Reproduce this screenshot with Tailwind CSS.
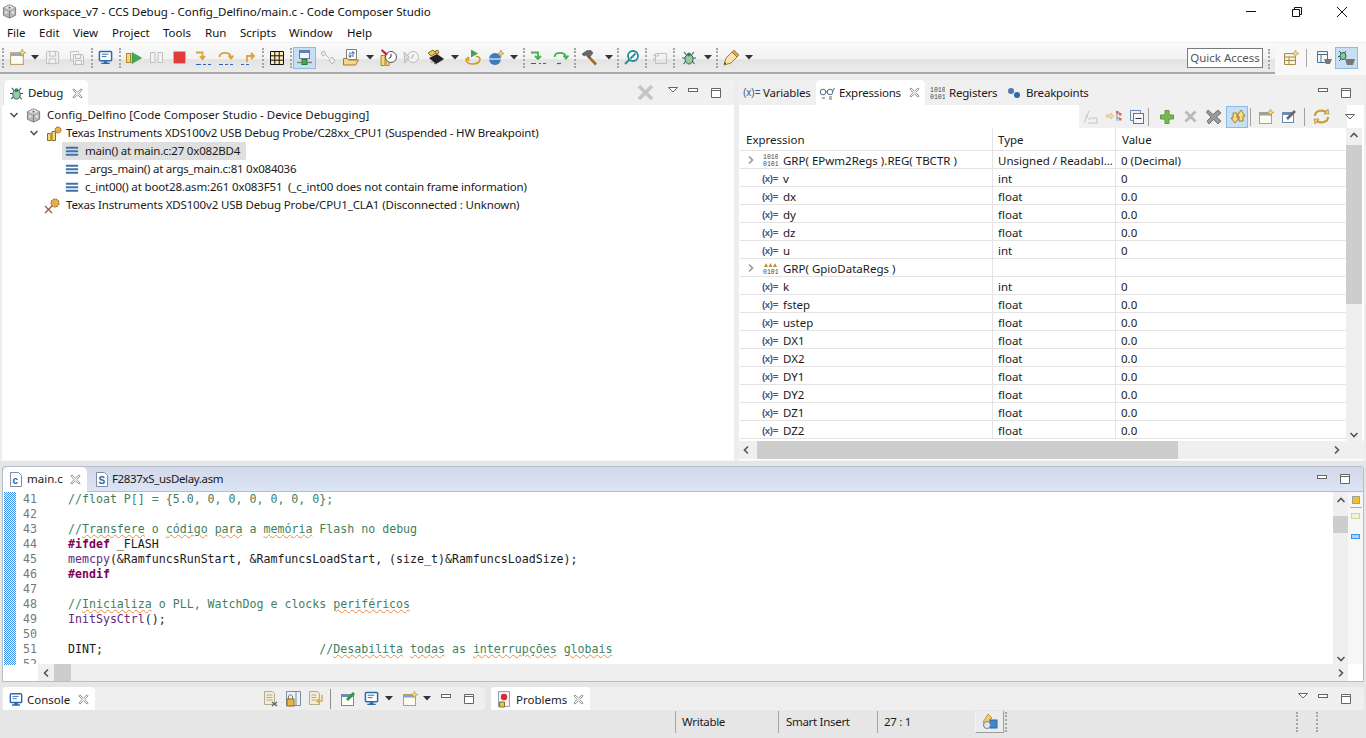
<!DOCTYPE html>
<html lang="en">
<head>
    <meta charset="UTF-8">
    <title>workspace_v7 - CCS Debug - Config_Delfino/main.c - Code Composer Studio</title>
    <script src="https://cdn.jsdelivr.net/npm/@tailwindcss/browser@4"></script>
</head>
<body class="w-[1366px] h-[738px] overflow-hidden flex flex-col bg-[#e6e6e6] text-[#1a1a1a] text-[11.5px] font-['Noto_Sans',sans-serif]">

    <!-- shared icons -->
    <svg class="absolute w-0 h-0">
        <defs><pattern id="dither" width="2" height="2" patternUnits="userSpaceOnUse"><rect width="2" height="2" fill="#fff"/><rect width="1" height="1" fill="#3a90ee"/><rect x="1" y="1" width="1" height="1" fill="#3a90ee"/></pattern></defs>
        <symbol id="x" viewBox="0 0 12 12"><path d="M2 1 6 4.500 10 1 11 2 7.500 6 11 10 10 11 6 7.500 2 11 1 10 4.500 6 1 2Z" fill="#fff" stroke="#8a8a8a"/></symbol>
        <symbol id="min" viewBox="0 0 12 12"><rect x="1.500" y="3.500" width="9" height="3" fill="#fff" stroke="#666"/></symbol>
        <symbol id="max" viewBox="0 0 12 12"><path d="M1.500 1.500h9v9h-9zM1.500 3.500h9" fill="#fff" stroke="#666"/></symbol>
        <symbol id="menu" viewBox="0 0 12 12"><path d="M1.500 3.500h9L6 8Z" fill="#fff" stroke="#666"/></symbol>
        <symbol id="drop" viewBox="0 0 8 5"><path d="M0 0h8L4 4.500Z" fill="#333"/></symbol>
        <symbol id="chev" viewBox="0 0 10 10"><path d="M1.500 3 5 6.500 8.500 3" fill="none" stroke="#555" stroke-width="1.600"/></symbol>
        <symbol id="frame" viewBox="0 0 16 16"><path d="M1 3h14v2.500H1zM1 7h14v2.500H1zM1 11h14v2.500H1z" fill="#3f74a8"/></symbol>
        <symbol id="wiz" viewBox="0 0 16 16"><rect x="1.500" y="3.500" width="12" height="11" fill="#fdfaf0" stroke="#b7a06a"/><rect x="2" y="4" width="11" height="2.500" fill="#7fa6cf"/><path d="M12.500 0 13.500 2.500 16 3.500 13.500 4.500 12.500 7 11.500 4.500 9 3.500 11.500 2.500Z" fill="#f8dc84" stroke="#b8902c" stroke-width=".6"/></symbol>
        <symbol id="monitor" viewBox="0 0 16 16"><rect x="1.500" y="1.500" width="13" height="10" rx="1" fill="#fff" stroke="#2f6aa8" stroke-width="1.600"/><path d="M4 4.500h7M4 7h5" stroke="#2f6aa8"/><path d="M6 12h4v1.500h2.500V15h-9v-1.500H6Z" fill="#2f6aa8"/></symbol>
        <symbol id="cube" viewBox="0 0 16 16"><path d="M8 1 14.500 4V12L8 15 1.500 12V4Z" fill="#b9b9b9" stroke="#7c7c7c"/><path d="M8 1 14.500 4 8 7 1.500 4Z" fill="#e9e9e9" stroke="#7c7c7c" stroke-width=".6"/><path d="M8 7V15" stroke="#7c7c7c"/><circle cx="8" cy="4" r="1" fill="#555"/><circle cx="4.500" cy="9" r="1" fill="#fff"/><circle cx="11.500" cy="9" r="1" fill="#fff"/></symbol>
        <symbol id="bug" viewBox="0 0 16 16"><path d="M3 2 5.500 5M13 2 10.500 5M1 8h3M12 8h3M2.500 14 5 11M13.500 14 11 11" stroke="#2f5f5a" stroke-width="1.100"/><ellipse cx="8" cy="9" rx="4" ry="5" fill="#9ccb9a" stroke="#2f5f5a"/><circle cx="8" cy="4.500" r="2" fill="#3f7a70"/></symbol>
    </svg>

    <!-- title bar -->
    <div class="h-[23px] shrink-0 bg-white flex items-center relative">
        <svg class="w-[15px] h-[15px] ml-[2px]"><use href="#cube"/></svg>
        <span class="ml-[6px] text-[#111]">workspace_v7 - CCS Debug - Config_Delfino/main.c - Code Composer Studio</span>
        <div class="ml-auto flex items-center h-full">
            <div class="w-[46px] flex justify-center"><svg class="w-[10px] h-[10px]" viewBox="0 0 10 10"><path d="M0 4.500h10" stroke="#111"/></svg></div>
            <div class="w-[46px] flex justify-center"><svg class="w-[10px] h-[10px]" viewBox="0 0 10 10"><path d="M.5 2.500h7v7h-7zM2.500 2.500v-2h7v7h-2" fill="none" stroke="#111"/></svg></div>
            <div class="w-[46px] flex justify-center pr-[2px]"><svg class="w-[10px] h-[10px]" viewBox="0 0 10 10"><path d="M0 0 10 10M10 0 0 10" stroke="#111"/></svg></div>
        </div>
    </div>

    <!-- menu bar -->
    <div class="h-[19px] shrink-0 bg-white flex items-center pl-[7px] text-[#111]">
        <span class="w-[32px]">File</span><span class="w-[34px]">Edit</span><span class="w-[39px]">View</span><span class="w-[51px]">Project</span><span class="w-[42px]">Tools</span><span class="w-[35px]">Run</span><span class="w-[49px]">Scripts</span><span class="w-[58px]">Window</span><span>Help</span>
    </div>

    <!-- main toolbar -->
    <div class="h-[33px] shrink-0 flex bg-[#f8f8f8] border-t border-[#f0f0f0]">
        <div class="w-[1275px] h-full flex items-center pl-[2px] bg-[linear-gradient(#fafafa,#f2f2f2_50%,#e3e3e3_52%,#ececec_92%,#a8a8a8_92%,#a8a8a8_96%,#f0f0f0_96%)] pb-[3px]">
            <i class="w-[3px] h-[20px] border-l-2 border-dotted border-[#a5a5a5]"></i>
            <div class="w-[24px] flex justify-center"><svg class="w-[17px] h-[17px]"><use href="#wiz"/></svg></div>
            <div class="w-[12px] flex justify-center"><svg class="w-[8px] h-[5px]"><use href="#drop"/></svg></div>
            <div class="w-[23px] flex justify-center"><svg class="w-[15px] h-[15px]" viewBox="0 0 16 16"><path d="M2.500 1.500h11l1 1v12h-13v-12ZM5 1.500v5h6v-5M4.500 14.500v-5h7v5" fill="#f0f0f0" stroke="#bdbdbd"/></svg></div>
            <div class="w-[25px] flex justify-center"><svg class="w-[16px] h-[16px]" viewBox="0 0 16 16"><path d="M1.500 1.500h8v2M1.500 1.500v9h2" fill="none" stroke="#c4c4c4"/><path d="M4.500 4.500h9l1 1v9h-10ZM6.500 4.500v4h5v-4M6.500 14.500v-4h6v4" fill="#f0f0f0" stroke="#bdbdbd"/></svg></div>
            <div class="w-[5px] flex justify-center"><i class="h-[20px] border-l-2 border-dotted border-[#a5a5a5]"></i></div>
            <div class="w-[23px] flex justify-center"><svg class="w-[15px] h-[15px]"><use href="#monitor"/></svg></div>
            <div class="w-[5px] flex justify-center"><i class="h-[20px] border-l-2 border-dotted border-[#a5a5a5]"></i></div>
            <div class="w-[23px] flex justify-center"><svg class="w-[16px] h-[16px]" viewBox="0 0 16 16"><rect x=".5" y="3.500" width="4" height="9" fill="#f5d978" stroke="#a98a2c"/><path d="M6 2.500 15.500 8 6 13.500Z" fill="#46a85a" stroke="#2e8a48" stroke-width=".6"/></svg></div>
            <div class="w-[23px] flex justify-center"><svg class="w-[13px] h-[13px]" viewBox="0 0 13 13"><path d="M.5 1.500h4.500v10H.5zM8 1.500h4.500v10H8z" fill="#f2f2f2" stroke="#bfbfbf"/></svg></div>
            <div class="w-[23px] flex justify-center"><svg class="w-[13px] h-[13px]" viewBox="0 0 13 13"><rect x=".5" y=".5" width="12" height="12" rx="1" fill="#e23b3b" stroke="#e8a0a0"/></svg></div>
            <div class="w-[23px] flex justify-center"><svg class="w-[16px] h-[16px]" viewBox="0 0 16 16"><path d="M1 2.500h6.500V8M5 6l2.500 3L10 6" fill="none" stroke="#d6a63a" stroke-width="1.800"/><path d="M1 14.500h5M8 14.500h3M13 14.500h3" stroke="#2f62a8" stroke-width="1.200"/></svg></div>
            <div class="w-[23px] flex justify-center"><svg class="w-[16px] h-[16px]" viewBox="0 0 16 16"><path d="M1.500 7C2 1.500 12 1.500 13 7M10.500 5.500 13 8.500 15.500 5.500" fill="none" stroke="#d6a63a" stroke-width="1.800"/><path d="M1 14.500h4M7 14.500h3M12 14.500h3" stroke="#2f62a8" stroke-width="1.200"/></svg></div>
            <div class="w-[23px] flex justify-center"><svg class="w-[16px] h-[16px]" viewBox="0 0 16 16"><path d="M6 12V6h6M10 3l3 3-3 3" fill="none" stroke="#d6a63a" stroke-width="1.800"/><path d="M0 14.500h3M5 14.500h3" stroke="#2f62a8" stroke-width="1.200"/></svg></div>
            <div class="w-[5px] flex justify-center"><i class="h-[20px] border-l-2 border-dotted border-[#a5a5a5]"></i></div>
            <div class="w-[23px] flex justify-center"><svg class="w-[14px] h-[14px]" viewBox="0 0 14 14"><path d="M.5.500h13v13H.500zM.5 4.800h13M.5 9.200h13M4.800.5v13M9.200.5v13" fill="#fbe9b7" stroke="#111"/></svg></div>
            <div class="w-[5px] flex justify-center"><i class="h-[20px] border-l-2 border-dotted border-[#a5a5a5]"></i></div>
            <div class="w-[23px] h-[22px] flex justify-center items-center bg-[#c6dff5] border border-[#8fbbe2]"><svg class="w-[15px] h-[16px]" viewBox="0 0 15 16"><rect x="2.500" y=".5" width="10" height="8" fill="#f4f4f4" stroke="#5a82ad"/><path d="M3 1h9v2H3z" fill="#5a82ad"/><path d="M0 12.500h15" stroke="#9a7b6a" stroke-width="1.400"/><rect x="5" y="9.500" width="5" height="5" fill="#48a84f" stroke="#2c7a35"/></svg></div>
            <div class="w-[23px] flex justify-center"><svg class="w-[16px] h-[16px]" viewBox="0 0 16 16"><path d="M1 3l3-2 2 3-3 2ZM6 5l3 3M10 9l2-2 3 4-3 3-3-4Z" fill="#eee" stroke="#b5b5b5"/></svg></div>
            <div class="w-[23px] flex justify-center"><svg class="w-[16px] h-[17px]" viewBox="0 0 16 17"><path d="M3.500.5h10v10h-10z" fill="#fff" stroke="#7d7d7d"/><path d="M7 3v5M5.500 6.500 7 8.500 8.500 6.500M10 8V3M8.500 4.500 10 2.500 11.500 4.500" fill="none" stroke="#2f62a8"/><path d="M.5 9.500h4l1 1.500h10l-3 5H.500Z" fill="#f6d88c" stroke="#a57d2a"/></svg></div>
            <div class="w-[15px] flex justify-center"><svg class="w-[8px] h-[5px]"><use href="#drop"/></svg></div>
            <div class="w-[23px] flex justify-center"><svg class="w-[17px] h-[17px]" viewBox="0 0 17 17"><path d="M1 6.500h4v10H1zM6 9.500h3v7H6z" fill="#f5d978" stroke="#a98a2c"/><circle cx="11" cy="8" r="5.500" fill="#fff" stroke="#555"/><path d="M11 5v3l-2.500 1.500" fill="none" stroke="#333"/><path d="M2 0 8 5 6 6.500 1 2Z" fill="#d9203a"/></svg></div>
            <div class="w-[23px] flex justify-center"><svg class="w-[17px] h-[17px]" viewBox="0 0 17 17"><circle cx="10" cy="8" r="5.500" fill="#f5f5f5" stroke="#bbb"/><path d="M10 5v3l-2.500 1.500M1 3l5 5-4 6Z" fill="#ddd" stroke="#b8b8b8"/></svg></div>
            <div class="w-[25px] flex justify-center"><svg class="w-[18px] h-[17px]" viewBox="0 0 18 17"><path d="M2 9 10 5 17 10 9 15Z" fill="#222"/><path d="M4 12.500 5.500 14M7 14l1.500 1.500M11 14l1-1M14 12.500l1-1" stroke="#777"/><path d="M1 4 6 1l3 3-5 3Z" fill="#f2c747" stroke="#8a6d1d"/><circle cx="10" cy="3" r="1.800" fill="#f2c747" stroke="#8a6d1d"/></svg></div>
            <div class="w-[13px] flex justify-center"><svg class="w-[8px] h-[5px]"><use href="#drop"/></svg></div>
            <div class="w-[23px] flex justify-center"><svg class="w-[16px] h-[17px]" viewBox="0 0 16 17"><path d="M6 .5 13 4.500 6 8.500Z" fill="#3ea45c"/><path d="M3.500 8 1 10.500c0 6 13 6 14 0 0-2-2-3-4-3M3.500 8v4" fill="none" stroke="#d69a1e" stroke-width="1.600"/></svg></div>
            <div class="w-[23px] flex justify-center"><svg class="w-[16px] h-[15px]" viewBox="0 0 16 15"><circle cx="7" cy="9" r="6" fill="#3e7bc0"/><path d="M1 9h12" stroke="#bcd5ee" stroke-width="1.600"/><path d="M13 0 14 2.500 16 3.500 14 4.500 13 7 12 4.500 10 3.500 12 2.500Z" fill="#f2d169" stroke="#a57d2a" stroke-width=".5"/></svg></div>
            <div class="w-[14px] flex justify-center"><svg class="w-[8px] h-[5px]"><use href="#drop"/></svg></div>
            <div class="w-[5px] flex justify-center"><i class="h-[20px] border-l-2 border-dotted border-[#a5a5a5]"></i></div>
            <div class="w-[23px] flex justify-center"><svg class="w-[16px] h-[15px]" viewBox="0 0 16 15"><path d="M1 2.500h7V8M5 6l3 3 3-3" fill="none" stroke="#3fb34f" stroke-width="1.800"/><path d="M1 13.500h5M9 13.500h2M13 13.500h3" stroke="#2f62a8" stroke-width="1.200"/></svg></div>
            <div class="w-[23px] flex justify-center"><svg class="w-[16px] h-[15px]" viewBox="0 0 16 15"><path d="M1.500 7C2 1.500 12 1.500 13 7M10.500 5.500 13 8.500 15.500 5.500" fill="none" stroke="#3fb34f" stroke-width="1.800"/><path d="M4 13.500h4" stroke="#2f62a8" stroke-width="1.200"/></svg></div>
            <div class="w-[5px] flex justify-center"><i class="h-[20px] border-l-2 border-dotted border-[#a5a5a5]"></i></div>
            <div class="w-[25px] flex justify-center"><svg class="w-[16px] h-[16px]" viewBox="0 0 16 16"><path d="M5.500 5.500 14 14.500" stroke="#a56a2c" stroke-width="2.600"/><path d="M0 4 5 .5h4l2 2.500-4 5-3-3-2 1Z" fill="#666" stroke="#444" stroke-width=".5"/></svg></div>
            <div class="w-[13px] flex justify-center"><svg class="w-[8px] h-[5px]"><use href="#drop"/></svg></div>
            <div class="w-[5px] flex justify-center"><i class="h-[20px] border-l-2 border-dotted border-[#a5a5a5]"></i></div>
            <div class="w-[23px] flex justify-center"><svg class="w-[15px] h-[15px]" viewBox="0 0 15 15"><circle cx="9" cy="6" r="5" fill="#fff" stroke="#1f8a9c" stroke-width="1.800"/><path d="M5.500 9.500 1 14M6.500 8.500l5-5" stroke="#1f8a9c" stroke-width="1.800"/></svg></div>
            <div class="w-[5px] flex justify-center"><i class="h-[20px] border-l-2 border-dotted border-[#a5a5a5]"></i></div>
            <div class="w-[23px] flex justify-center"><svg class="w-[15px] h-[13px]" viewBox="0 0 15 13"><path d="M3.500 2.500h11v10h-11zM3.500 5h3V2.500M1 3.500l3 2M1 7l3 2M1 9.500l3-2" fill="none" stroke="#c0c0c0"/></svg></div>
            <div class="w-[5px] flex justify-center"><i class="h-[20px] border-l-2 border-dotted border-[#a5a5a5]"></i></div>
            <div class="w-[25px] flex justify-center"><svg class="w-[16px] h-[16px]"><use href="#bug"/></svg></div>
            <div class="w-[13px] flex justify-center"><svg class="w-[8px] h-[5px]"><use href="#drop"/></svg></div>
            <div class="w-[5px] flex justify-center"><i class="h-[20px] border-l-2 border-dotted border-[#a5a5a5]"></i></div>
            <div class="w-[24px] flex justify-center"><svg class="w-[16px] h-[16px]" viewBox="0 0 16 16"><path d="M1 15 3 8 9 2l5 5-6 6Z" fill="#f8e3a8" stroke="#a57d2a"/><path d="M9 2l2-2 5 5-2 2Z" fill="#e8a24a" stroke="#8a5d1a" stroke-width=".6"/><path d="M1 15l2-1.500L2 12Z" fill="#222"/></svg></div>
            <div class="w-[12px] flex justify-center"><svg class="w-[8px] h-[5px]"><use href="#drop"/></svg></div>
            <div class="ml-auto mr-[12px] w-[76px] h-[20px] bg-white border border-[#7a7a7a] flex items-center justify-center text-[#555]">Quick Access</div>
        </div>
        <div class="flex-1 flex items-center pb-[3px] relative">
            <i class="absolute left-[-7px] top-[6px] h-[20px] border-l-2 border-dotted border-[#a5a5a5]"></i>
            <div class="ml-[8px] w-[16px] h-[16px]"><svg class="w-[16px] h-[16px]" viewBox="0 0 16 16"><path d="M1.500 3.500h11v11h-11zM1.500 7h11M1.500 10.500h11M6 7v7.500" fill="#fbf3d8" stroke="#a58b4f"/><path d="M12.500 0 13.500 2.500 16 3.500 13.500 4.500 12.500 7 11.500 4.500 9 3.500 11.500 2.500Z" fill="#f8dc84" stroke="#b8902c" stroke-width=".6"/></svg></div>
            <i class="ml-[7px] w-px h-[18px] bg-[#a8a8a8]"></i>
            <div class="ml-[9px] w-[16px] h-[16px]"><svg class="w-[16px] h-[16px]" viewBox="0 0 16 16"><path d="M1.500 1.500h10v11h-10zM1.500 4.500h10M5 4.500v8" fill="#f6f6f6" stroke="#4d7095"/><path d="M8 9h8l-2 5h-4Z" fill="#777"/></svg></div>
            <div class="ml-[3px] w-[23px] h-[22px] bg-[#c6dff5] border border-[#8fbbe2] flex items-center justify-center"><svg class="w-[17px] h-[16px]" viewBox="0 0 17 16"><path d="M1 1 4 4M8 1 5.500 4M0 6.500h3M1 11l3-3" stroke="#2f5f5a"/><ellipse cx="5" cy="6" rx="3" ry="3.500" fill="#8fc98c" stroke="#2f5f5a"/><path d="M7 9h10l-2 6h-6Z" fill="#777"/></svg></div>
        </div>
    </div>

    <!-- debug and expressions views -->
    <div class="h-[386px] shrink-0 flex pt-[5px] pl-[2px] pr-[2px] gap-[5px] bg-[#ededed]">

        <section class="w-[732px] flex flex-col bg-white rounded-t-[4px] border-b border-[#f5f5f5]">
            <div class="h-[25px] shrink-0 flex items-center bg-[#f0f0f0] rounded-t-[4px] pr-[12px]">
                <div class="w-[85px] h-full bg-white rounded-t-[5px] flex items-center pl-[5px] pt-[1px] ml-[1px] border-l border-[#e0e0e0]">
                    <svg class="w-[15px] h-[15px]"><use href="#bug"/></svg>
                    <span class="ml-[4px] tracking-[-0.2px]">Debug</span>
                    <svg class="w-[11px] h-[11px] ml-[9px]"><use href="#x"/></svg>
                </div>
                <svg class="w-[17px] h-[17px] ml-[549px]" viewBox="0 0 13 13"><path d="M2.500.5 6.500 4.500 10.500.5 12.500 2.500 8.500 6.500 12.500 10.500 10.500 12.500 6.500 8.500 2.500 12.500.5 10.500 4.500 6.500.5 2.500Z" fill="#c6c6c6"/></svg>
                <svg class="w-[12px] h-[12px] ml-[13px] -mt-[6px]"><use href="#menu"/></svg>
                <svg class="w-[12px] h-[12px] ml-[8px] -mt-[3px]"><use href="#min"/></svg>
                <svg class="w-[12px] h-[12px] ml-[11px]"><use href="#max"/></svg>
            </div>
            <div class="pt-[1px] text-[#1a1a1a]">
                <div class="flex items-center h-[18px] pl-[7px]"><svg class="w-[10px] h-[10px] mr-[7px]"><use href="#chev"/></svg><svg class="w-[15px] h-[15px]"><use href="#cube"/></svg><span class="ml-[6px]">Config_Delfino [Code Composer Studio - Device Debugging]</span></div>
                <div class="flex items-center h-[18px] pl-[27px]"><svg class="w-[10px] h-[10px] mr-[8px]"><use href="#chev"/></svg><svg class="w-[15px] h-[15px]" viewBox="0 0 15 15"><path d="M.5 7.500h3.500v7H.5zM5 5.500h3.500v9H5z" fill="#f5d978" stroke="#8a6d1d"/><circle cx="11" cy="4" r="3" fill="#e8b04a" stroke="#8a5d1a" stroke-dasharray="1.500 .5"/></svg><span class="ml-[4px] tracking-[-0.19px]">Texas Instruments XDS100v2 USB Debug Probe/C28xx_CPU1 (Suspended - HW Breakpoint)</span></div>
                <div class="flex items-center h-[18px] pl-[60px]"><div class="flex items-center h-full w-[184px] bg-[#dfdfdf] pl-[3px]"><svg class="w-[14px] h-[14px]"><use href="#frame"/></svg><span class="ml-[6px] tracking-[-0.2px]">main() at main.c:27 0x082BD4</span></div></div>
                <div class="flex items-center h-[18px] pl-[63px]"><svg class="w-[14px] h-[14px]"><use href="#frame"/></svg><span class="ml-[6px] tracking-[-0.24px]">_args_main() at args_main.c:81 0x084036</span></div>
                <div class="flex items-center h-[18px] pl-[63px]"><svg class="w-[14px] h-[14px]"><use href="#frame"/></svg><span class="ml-[6px] whitespace-pre tracking-[-0.155px]">c_int00() at boot28.asm:261 0x083F51  (_c_int00 does not contain frame information)</span></div>
                <div class="flex items-center h-[18px] pl-[42px]"><svg class="w-[18px] h-[17px]" viewBox="0 0 18 17"><path d="M1 16 8 9M1 9l7 7" stroke="#9a5a3a" stroke-width="1.300"/><circle cx="11" cy="6" r="4" fill="#e8b04a" stroke="#8a5d1a" stroke-dasharray="2 .7"/></svg><span class="ml-[4px] tracking-[-0.15px]">Texas Instruments XDS100v2 USB Debug Probe/CPU1_CLA1 (Disconnected : Unknown)</span></div>
            </div>
        </section>

        <section class="flex-1 flex flex-col bg-white rounded-t-[4px] border-b border-[#f5f5f5]">
            <div class="h-[25px] shrink-0 flex items-center bg-[#f0f0f0] rounded-t-[4px]">
                <span class="ml-[4px] w-[20px] font-['Liberation_Sans',sans-serif] text-[10px] text-[#3d5680]">(x)=</span>
                <span class="w-[50px] tracking-[-0.2px]">Variables</span>
                <div class="w-[109px] h-full bg-white rounded-t-[5px] flex items-center pl-[3px] ml-[3px]">
                    <svg class="w-[16px] h-[14px]" viewBox="0 0 16 14"><circle cx="4" cy="6" r="2.800" fill="#fff" stroke="#4d6a8a"/><circle cx="11" cy="6" r="2.800" fill="#fff" stroke="#4d6a8a"/><path d="M6.800 5.500h1.500M13.800 5 15.500 2M3 12h3M10 11h3M10 13h3" fill="none" stroke="#4d6a8a"/></svg>
                    <span class="ml-[4px] tracking-[-0.2px]">Expressions</span>
                    <svg class="w-[11px] h-[11px] ml-[8px]"><use href="#x"/></svg>
                </div>
                <svg class="w-[15px] h-[14px] ml-[5px]" viewBox="0 0 15 14"><text x="0" y="6" font-size="6.500" fill="#444" font-family="Liberation Mono">1010</text><text x="0" y="13" font-size="6.500" fill="#444" font-family="Liberation Mono">0101</text></svg>
                <span class="ml-[4px] w-[58px] tracking-[-0.2px]">Registers</span>
                <svg class="w-[14px] h-[12px]" viewBox="0 0 14 12"><circle cx="4" cy="4" r="3" fill="#4d7aa8"/><circle cx="10" cy="8" r="3" fill="#2f6aa8"/></svg>
                <span class="ml-[5px] tracking-[-0.2px]">Breakpoints</span>
                <svg class="w-[12px] h-[12px] ml-auto -mt-[3px]"><use href="#min"/></svg>
                <svg class="w-[12px] h-[12px] ml-[11px] mr-[12px]"><use href="#max"/></svg>
            </div>
            <div class="h-[23px] shrink-0 flex items-center bg-[linear-gradient(to_right,#fff_340px,#f0f0f0_340px,#f0f0f0_608px,#fff_608px)] pl-[340px]">
                <div class="w-[23px] flex justify-center"><svg class="w-[15px] h-[14px]" viewBox="0 0 15 14"><path d="M1 13 6 1M2 5l5 5M7 8h7v5H5" fill="none" stroke="#c4c4c4"/></svg></div>
                <div class="w-[23px] flex justify-center"><svg class="w-[16px] h-[13px]" viewBox="0 0 16 13"><path d="M0 5h5V3l3 3-3 3V7H0Z" fill="#f8e3a8" stroke="#c9ae5f" stroke-width=".6"/><path d="M11 2v9M11 3h3M11 8h3" stroke="#7a8aa0"/><rect x="10" y="1" width="2.500" height="2.500" fill="#e06060"/><rect x="13" y="3" width="2.500" height="2.500" fill="#e06060"/><rect x="13" y="8" width="2.500" height="2.500" fill="#e06060"/></svg></div>
                <div class="w-[23px] flex justify-center"><svg class="w-[14px] h-[14px]" viewBox="0 0 14 14"><path d="M.5.500h10v3M.5.500v10h3" fill="none" stroke="#6b8bb0"/><rect x="3.500" y="3.500" width="10" height="10" fill="#f4f8fc" stroke="#567ba3"/><path d="M5.500 8.500h6" stroke="#333"/></svg></div>
                <i class="w-px h-[18px] bg-[#a0a0a0] mr-[6px]"></i>
                <div class="w-[23px] flex justify-center"><svg class="w-[14px] h-[14px]" viewBox="0 0 14 14"><path d="M5 .5h4v4.500h4.500v4H9v4.500H5V9H.5V5H5Z" fill="#76b853" stroke="#5a9a3a"/></svg></div>
                <div class="w-[25px] flex justify-center"><svg class="w-[13px] h-[13px]" viewBox="0 0 13 13"><path d="M2.500.5 6.500 4.500 10.500.5 12.500 2.500 8.500 6.500 12.500 10.500 10.500 12.500 6.500 8.500 2.500 12.500.5 10.500 4.500 6.500.5 2.500Z" fill="#b9b9b9"/></svg></div>
                <div class="w-[21px] flex justify-center"><svg class="w-[16px] h-[16px]" viewBox="0 0 16 16"><path d="M2 1 7 5.500 12 1 15 4 10.500 8 15 12 12 15 7.500 10.500 3 15 1 12 5 8 .5 3.500Z" fill="#9a9a9a" stroke="#555" stroke-width=".7"/></svg></div>
                <div class="w-[22px] h-[22px] ml-[2px] flex justify-center items-center bg-[#c6dff5] border border-[#8fbbe2]"><svg class="w-[17px] h-[16px]" viewBox="0 0 17 16"><path d="M2 6h2V1h4v5h2l-4 5Z" transform="translate(0 3)" fill="#f8dc84" stroke="#a57d2a"/><path d="M9 8h2v5h4V8h2l-4-6Z" transform="translate(-1 -1)" fill="#f8dc84" stroke="#a57d2a"/></svg></div>
                <i class="w-px h-[18px] bg-[#a0a0a0] ml-[2px] mr-[3px]"></i>
                <div class="w-[23px] flex justify-center"><svg class="w-[16px] h-[16px]"><use href="#wiz"/></svg></div>
                <div class="w-[25px] flex justify-center"><svg class="w-[15px] h-[15px]" viewBox="0 0 15 15"><rect x=".5" y="3.500" width="11" height="10" fill="#fff" stroke="#6b8bb0"/><path d="M1 4h10v2H1z" fill="#6b8bb0"/><path d="M5 10 13 2" stroke="#666" stroke-width="2.500"/></svg></div>
                <i class="w-px h-[18px] bg-[#a0a0a0] ml-[2px] mr-[5px]"></i>
                <div class="w-[23px] flex justify-center"><svg class="w-[17px] h-[15px]" viewBox="0 0 17 15"><path d="M2 7c0-6 9-7 12-3M15 8c0 6-9 7-12 3" fill="none" stroke="#c9a02c" stroke-width="2.200"/><path d="M11 5l5 0-1-5ZM6 10l-5 0 1 5Z" fill="#f2cf55" stroke="#8a6d1d" stroke-width=".5"/></svg></div>
                <svg class="w-[12px] h-[12px] ml-[11px]"><use href="#menu"/></svg>
            </div>
            <div class="flex flex-1 min-h-0">
                <div class="flex-1 flex flex-col min-w-0 pl-[1px]">
                    <div class="flex h-[23px] shrink-0 items-center border-b border-[#e4e4e4]">
                        <span class="w-[253px] pl-[6px] pt-[2px] border-r border-[#e4e4e4] leading-[20px]">Expression</span>
                        <span class="w-[123px] pl-[5px] pt-[2px] border-r border-[#e4e4e4] leading-[20px]">Type</span>
                        <span class="pl-[6px] pt-[2px] leading-[20px]">Value</span>
                    </div>
                    <div id="rows" class="flex-1 min-h-0"></div>
                </div>
                <div class="w-[16px] flex flex-col items-center bg-[#efefef] mr-[2px]">
                    <svg class="w-[10px] h-[10px] mt-[2px] rotate-180"><use href="#chev"/></svg>
                    <div class="w-full h-[159px] bg-[#cdcdcd] mt-[5px]"></div>
                    <svg class="w-[10px] h-[10px] mt-auto mb-[1px]"><use href="#chev"/></svg>
                </div>
            </div>
            <div class="h-[18px] shrink-0 flex items-center bg-[#efefef] mb-[1px]">
                <svg class="w-[10px] h-[10px] ml-[2px] rotate-90"><use href="#chev"/></svg>
                <div class="h-full w-[421px] bg-[#cdcdcd] ml-[6px]"></div>
                <svg class="w-[10px] h-[10px] ml-[154px] -rotate-90"><use href="#chev"/></svg>
            </div>
        </section>
    </div>

    <!-- editor -->
    <div class="h-[221px] shrink-0 flex flex-col pt-[5px] px-[2px] bg-[#e6e6e6]">
        <section class="flex-1 flex flex-col min-h-0 bg-white border border-[#b5bccb] rounded-t-[3px]">
            <div class="h-[25px] shrink-0 flex items-center bg-[linear-gradient(#d2d9e8,#dbe5f6)] border-b border-[#b5bccb]">
                <div class="w-[84px] h-[25px] bg-white rounded-t-[5px] flex items-center pl-[6px]">
                    <svg class="w-[14px] h-[15px]" viewBox="0 0 14 15"><path d="M1.500.5h8l3 3v11h-11Z" fill="#fff" stroke="#7d8ea0"/><text x="3.500" y="12" font-size="10" fill="#2f62a8" font-family="Liberation Sans" font-weight="700">c</text></svg>
                    <span class="ml-[4px]">main.c</span>
                    <svg class="w-[11px] h-[11px] ml-[7px]"><use href="#x"/></svg>
                </div>
                <svg class="w-[14px] h-[15px] ml-[8px]" viewBox="0 0 14 15"><path d="M1.500.5h8l3 3v11h-11Z" fill="#fff" stroke="#7d8ea0"/><text x="3.500" y="12" font-size="10" fill="#2f62a8" font-family="Liberation Sans" font-weight="700">S</text></svg>
                <span class="ml-[3px] tracking-[-0.35px]">F2837xS_usDelay.asm</span>
                <svg class="w-[12px] h-[12px] ml-auto -mt-[3px]"><use href="#min"/></svg>
                <svg class="w-[12px] h-[12px] ml-[11px] mr-[12px]"><use href="#max"/></svg>
            </div>
            <div class="flex-1 min-h-0 flex">
                <svg class="w-[12px] h-[173px] ml-[1px] shrink-0" shape-rendering="crispEdges"><rect width="12" height="100%" fill="url(#dither)"/></svg>
                <div class="flex-1 min-w-0 flex flex-col">
                    <div class="flex-1 min-h-0 overflow-hidden flex font-['DejaVu_Sans_Mono',monospace] text-[11.6px] leading-[15px]">
                        <div class="w-[21px] shrink-0 text-right text-[#787878] whitespace-pre"><div>41</div><div>42</div><div>43</div><div>44</div><div>45</div><div>46</div><div>47</div><div>48</div><div>49</div><div>50</div><div>51</div><div>52</div></div>
                        <div class="pl-[31px] whitespace-pre text-[#1a1a1a]"><div class="text-[#3f7f5f]">//float P[] = {5.0, 0, 0, 0, 0, 0, 0};</div>
<div class="text-[#3f7f5f]">//<span class="underline decoration-wavy decoration-[#f0893c] decoration-1">Transfere</span> o <span class="underline decoration-wavy decoration-[#f0893c] decoration-1">código</span> <span class="underline decoration-wavy decoration-[#f0893c] decoration-1">para</span> a <span class="underline decoration-wavy decoration-[#f0893c] decoration-1">memória</span> Flash no debug</div><div><span class="font-bold text-[#7f0055]">#ifdef</span> _FLASH</div><div><span class="text-[#642880]">memcpy</span>(&amp;RamfuncsRunStart, &amp;RamfuncsLoadStart, (size_t)&amp;RamfuncsLoadSize);</div><div class="font-bold text-[#7f0055]">#endif</div>
<div class="text-[#3f7f5f]">//<span class="underline decoration-wavy decoration-[#f0893c] decoration-1">Inicializa</span> o PLL, WatchDog e clocks <span class="underline decoration-wavy decoration-[#f0893c] decoration-1">periféricos</span></div><div><span class="text-[#642880]">InitSysCtrl</span>();</div>
<div>DINT;                               <span class="text-[#3f7f5f]">//<span class="underline decoration-wavy decoration-[#f0893c] decoration-1">Desabilita</span> <span class="underline decoration-wavy decoration-[#f0893c] decoration-1">todas</span> as <span class="underline decoration-wavy decoration-[#f0893c] decoration-1">interrupções</span> <span class="underline decoration-wavy decoration-[#f0893c] decoration-1">globais</span></span></div></div>
                        <div class="ml-auto w-[15px] shrink-0 bg-[#efefef] flex flex-col items-center">
                            <svg class="w-[10px] h-[10px] mt-[3px] rotate-180"><use href="#chev"/></svg>
                            <div class="w-full h-[17px] bg-[#cdcdcd] mt-[11px]"></div>
                            <svg class="w-[10px] h-[10px] mt-auto"><use href="#chev"/></svg>
                        </div>
                        <div class="w-[15px] shrink-0 bg-[#f6f6f6] flex flex-col items-center">
                            <div class="w-[8px] h-[8px] mt-[4px] bg-[#f4c020] border border-[#a0a0a0]"></div>
                            <div class="w-[12px] h-px bg-[#aaa] mt-[3px]"></div>
                            <div class="w-[9px] h-[6px] mt-[5px] bg-[#eaf4e0] border border-[#dcd28c]"></div>
                            <div class="w-[9px] h-[5px] mt-[15px] bg-[#a5d2ff] border border-[#3a96ee]"></div>
                        </div>
                    </div>
                    <div class="h-[17px] shrink-0 flex items-center bg-[#efefef] ml-[22px] mr-[15px]">
                        <svg class="w-[10px] h-[10px] ml-[3px] rotate-90"><use href="#chev"/></svg>
                        <div class="h-full w-[17px] bg-[#cdcdcd] ml-[3px]"></div>
                        <svg class="w-[10px] h-[10px] ml-auto mr-[2px] -rotate-90"><use href="#chev"/></svg>
                    </div>
                </div>
            </div>
        </section>
    </div>

    <!-- console and problems -->
    <div class="h-[28px] shrink-0 flex pt-[5px] px-[2px] gap-[6px] bg-[#e6e6e6]">
        <div class="w-[483px] flex items-center bg-[#efefef] rounded-t-[4px] rounded-b-[4px]">
            <div class="w-[92px] h-full bg-white rounded-t-[4px] flex items-center pl-[6px] pt-[2px] ml-[1px]">
                <svg class="w-[14px] h-[15px]"><use href="#monitor"/></svg>
                <span class="ml-[4px]">Console</span>
                <svg class="w-[11px] h-[11px] ml-[8px]"><use href="#x"/></svg>
            </div>
            <svg class="w-[15px] h-[16px] ml-[168px]" viewBox="0 0 15 16"><path d="M1.500.5h8l2 2v11h-10ZM3.500 4h6M3.500 6.500h6M3.500 9h6" fill="#f2ecd8" stroke="#b5aa90"/><path d="M9 11l5 4M14 11l-5 4" stroke="#666" stroke-width="1.500"/></svg>
            <svg class="w-[15px] h-[16px] ml-[8px]" viewBox="0 0 15 16"><path d="M.5.500h14v14H.5zM10 .5v14" fill="#eef3f8" stroke="#7a8ea3"/><rect x="1" y="8" width="7" height="7" fill="#e8b53f" stroke="#8a6d1d"/><path d="M2.500 8V6c0-3 4-3 4 0v2" fill="none" stroke="#777"/></svg>
            <svg class="w-[15px] h-[16px] ml-[8px]" viewBox="0 0 15 16"><path d="M.5.500h8l2 2v11H.5ZM2.500 4h5M2.500 6.500h5M2.500 9h5" fill="#f2ecd8" stroke="#b5aa90"/><path d="M13 4v6H8M10 8l-2 2 2 2" fill="none" stroke="#d8b04a" stroke-width="1.500"/></svg>
            <i class="w-px h-[20px] bg-[#8d8d8d] ml-[6px]"></i>
            <svg class="w-[15px] h-[15px] ml-[10px]" viewBox="0 0 15 15"><rect x=".5" y="3.500" width="12" height="11" fill="#fff" stroke="#6b8bb0"/><path d="M1 4h11v2H1z" fill="#6b8bb0"/><path d="M6 9 13 2" stroke="#2f9a3f" stroke-width="3"/></svg>
            <svg class="w-[15px] h-[15px] ml-[8px]"><use href="#monitor"/></svg>
            <svg class="w-[8px] h-[5px] ml-[6px]"><use href="#drop"/></svg>
            <svg class="w-[16px] h-[16px] ml-[9px]"><use href="#wiz"/></svg>
            <svg class="w-[8px] h-[5px] ml-[5px]"><use href="#drop"/></svg>
            <svg class="w-[12px] h-[12px] ml-[9px] -mt-[3px]"><use href="#min"/></svg>
            <svg class="w-[12px] h-[12px] ml-[11px]"><use href="#max"/></svg>
        </div>
        <div class="flex-1 flex items-center bg-[#efefef] rounded-t-[4px] rounded-b-[4px]">
            <div class="w-[99px] h-full bg-white rounded-t-[4px] flex items-center pl-[6px] pt-[2px]">
                <svg class="w-[14px] h-[17px]" viewBox="0 0 14 17"><path d="M1.500.5h11v15h-11Z" fill="#f4f4f4" stroke="#8da0b4"/><circle cx="7" cy="6" r="3.200" fill="#d9283a"/><path d="M2.500 11h5v5h-5z" fill="#e8c35a" stroke="#8a6d1d"/></svg>
                <span class="ml-[5px]">Problems</span>
                <svg class="w-[11px] h-[11px] ml-[6px]"><use href="#x"/></svg>
            </div>
            <svg class="w-[12px] h-[12px] ml-auto -mt-[6px]"><use href="#menu"/></svg>
            <svg class="w-[12px] h-[12px] ml-[8px] -mt-[3px]"><use href="#min"/></svg>
            <svg class="w-[12px] h-[12px] ml-[11px] mr-[12px]"><use href="#max"/></svg>
        </div>
    </div>

    <!-- status bar -->
    <div class="h-[28px] shrink-0 flex items-center bg-[#e6e6e6] pb-[4px] tracking-[-0.3px]">
        <i class="w-px h-[22px] bg-[#a5a5a5] ml-[675px]"></i><span class="ml-[6px] w-[96px]">Writable</span>
        <i class="w-px h-[22px] bg-[#a5a5a5]"></i><span class="ml-[7px] w-[91px]">Smart Insert</span>
        <i class="w-px h-[22px] bg-[#a5a5a5]"></i><span class="ml-[6px] w-[91px]">27 : 1</span>
        <div class="w-[29px] h-[22px] flex items-center justify-center border-r border-b border-[#9d9d9d] border-l border-l-[#f4f4f4] bg-[#ececec]"><svg class="w-[16px] h-[17px]" viewBox="0 0 16 17"><path d="M1 9l5-8 4 4-2 1 1 5H3Z" fill="#f5cb62" stroke="#a57d2a" stroke-width=".7"/><rect x="8" y="7" width="7" height="8" fill="#3f87c8" stroke="#2f62a8"/><circle cx="5" cy="12" r="3.500" fill="#dfe6ee" stroke="#6a7f95"/></svg></div>
        <i class="ml-[1px] h-[20px] border-l-2 border-dotted border-[#a5a5a5]"></i>
        <i class="ml-[289px] h-[20px] border-l-2 border-dotted border-[#a5a5a5]"></i>
        <i class="ml-[18px] h-[20px] border-l-2 border-dotted border-[#a5a5a5]"></i>
    </div>

    <script>
        const rows = [
            ['grp1', 'GRP( EPwm2Regs ).REG( TBCTR )', 'Unsigned / Readabl...', '0 (Decimal)'],
            ['var', 'v', 'int', '0'], ['var', 'dx', 'float', '0.0'], ['var', 'dy', 'float', '0.0'],
            ['var', 'dz', 'float', '0.0'], ['var', 'u', 'int', '0'],
            ['grp2', 'GRP( GpioDataRegs )', '', ''],
            ['var', 'k', 'int', '0'], ['var', 'fstep', 'float', '0.0'], ['var', 'ustep', 'float', '0.0'],
            ['var', 'DX1', 'float', '0.0'], ['var', 'DX2', 'float', '0.0'], ['var', 'DY1', 'float', '0.0'],
            ['var', 'DY2', 'float', '0.0'], ['var', 'DZ1', 'float', '0.0'], ['var', 'DZ2', 'float', '0.0'],
        ];
        const bits = '<svg class="w-[15px] h-[14px] ml-[7px] mr-[5px]" viewBox="0 0 15 14"><text x="0" y="6" font-size="6.500" fill="#444" font-family="Liberation Mono">1010</text><text x="0" y="13" font-size="6.500" fill="#444" font-family="Liberation Mono">0101</text></svg>';
        const arrow = '<svg class="w-[10px] h-[10px] ml-[6px] -rotate-90 opacity-60"><use href="#chev"/></svg>';
        const people = '<svg class="w-[15px] h-[14px] ml-[7px] mr-[5px]" viewBox="0 0 15 14"><path d="M1 6l2-4 2 4ZM5.500 6l2-4 2 4ZM10 6l2-4 2 4Z" fill="#b8923a"/><text x="0" y="13" font-size="6.500" fill="#444" font-family="Liberation Mono">0101</text></svg>';
        document.getElementById('rows').innerHTML = rows.map(([kind, name, type, value]) => {
            let lead = '<span class="ml-[22px] w-[21px] pt-[3px] font-[\'Liberation_Sans\',sans-serif] text-[9.5px] font-bold text-[#3d5680] tracking-[-0.3px]">(x)=</span>';
            if (kind === 'grp1') lead = arrow + bits;
            if (kind === 'grp2') lead = arrow + people;
            return `<div class="flex h-[18px] items-center border-b border-[#e4e4e4]">
                <div class="w-[253px] h-full flex items-center border-r border-[#e4e4e4]">${lead}<span class="pt-[2px]">${name}</span></div>
                <div class="w-[123px] h-full flex items-center pl-[5px] border-r border-[#e4e4e4]"><span class="pt-[2px]">${type}</span></div>
                <div class="pl-[5px] pt-[2px]">${value}</div>
            </div>`;
        }).join('');
    </script>
</body>
</html>
